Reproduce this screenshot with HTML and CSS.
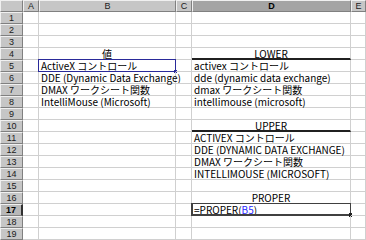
FILE: index.html
```html
<!DOCTYPE html>
<html lang="ja">
<head>
<meta charset="utf-8">
<title>Sheet</title>
<link rel="stylesheet" href="styles.css">
</head>
<body>
<div class="sheet">
  <div class="hd corner"></div><div class="hd col">A</div><div class="hd col">B</div><div class="hd col">C</div><div class="hd col sel">D</div><div class="hd col">E</div>

  <div class="hd rh">1</div><div class="cell"></div><div class="cell"></div><div class="cell"></div><div class="cell"></div><div class="cell"></div>
  <div class="hd rh">2</div><div class="cell"></div><div class="cell"></div><div class="cell"></div><div class="cell"></div><div class="cell"></div>
  <div class="hd rh">3</div><div class="cell"></div><div class="cell"></div><div class="cell"></div><div class="cell"></div><div class="cell"></div>
  <div class="hd rh">4</div><div class="cell"></div><div class="cell center">値</div><div class="cell"></div><div class="cell center title">LOWER</div><div class="cell"></div>
  <div class="hd rh">5</div><div class="cell"></div><div class="cell ref">ActiveX コントロール</div><div class="cell"></div><div class="cell">activex コントロール</div><div class="cell"></div>
  <div class="hd rh">6</div><div class="cell"></div><div class="cell">DDE (Dynamic Data Exchange)</div><div class="cell"></div><div class="cell">dde (dynamic data exchange)</div><div class="cell"></div>
  <div class="hd rh">7</div><div class="cell"></div><div class="cell">DMAX ワークシート関数</div><div class="cell"></div><div class="cell">dmax ワークシート関数</div><div class="cell"></div>
  <div class="hd rh">8</div><div class="cell"></div><div class="cell">IntelliMouse (Microsoft)</div><div class="cell"></div><div class="cell">intellimouse (microsoft)</div><div class="cell"></div>
  <div class="hd rh">9</div><div class="cell"></div><div class="cell"></div><div class="cell"></div><div class="cell"></div><div class="cell"></div>
  <div class="hd rh">10</div><div class="cell"></div><div class="cell"></div><div class="cell"></div><div class="cell center title">UPPER</div><div class="cell"></div>
  <div class="hd rh">11</div><div class="cell"></div><div class="cell"></div><div class="cell"></div><div class="cell">ACTIVEX コントロール</div><div class="cell"></div>
  <div class="hd rh">12</div><div class="cell"></div><div class="cell"></div><div class="cell"></div><div class="cell">DDE (DYNAMIC DATA EXCHANGE)</div><div class="cell"></div>
  <div class="hd rh">13</div><div class="cell"></div><div class="cell"></div><div class="cell"></div><div class="cell">DMAX ワークシート関数</div><div class="cell"></div>
  <div class="hd rh">14</div><div class="cell"></div><div class="cell"></div><div class="cell"></div><div class="cell">INTELLIMOUSE (MICROSOFT)</div><div class="cell"></div>
  <div class="hd rh">15</div><div class="cell"></div><div class="cell"></div><div class="cell"></div><div class="cell"></div><div class="cell"></div>
  <div class="hd rh">16</div><div class="cell"></div><div class="cell"></div><div class="cell"></div><div class="cell center">PROPER</div><div class="cell"></div>
  <div class="hd rh sel">17</div><div class="cell"></div><div class="cell"></div><div class="cell"></div><div class="cell active">=PROPER(<span class="refname">B5</span>)</div><div class="cell"></div>
  <div class="hd rh">18</div><div class="cell"></div><div class="cell"></div><div class="cell"></div><div class="cell"></div><div class="cell"></div>
  <div class="hd rh">19</div><div class="cell"></div><div class="cell"></div><div class="cell"></div><div class="cell"></div><div class="cell"></div>
</div>
</body>
</html>
```

FILE: styles.css
```css
* { box-sizing: border-box; }
html, body { margin: 0; padding: 0; background: #fff; }
body { width: 366px; height: 240px; overflow: hidden; }

.sheet {
  display: grid;
  grid-template-columns: 23px 16px 137px 16px 159px 15px;
  grid-auto-rows: 12px;
  font-family: "Noto Sans CJK JP", sans-serif;
  font-size: 10px;
  color: #000;
}

.cell {
  border-right: 1px solid #d0d0d0;
  border-bottom: 1px solid #d0d0d0;
  padding: 0 2px;
  line-height: 12px;
  white-space: nowrap;
  position: relative;
}

.center { text-align: center; }
.title { border-bottom: 2px solid #202020; }

.hd {
  background: #c6c6c6;
  border-top: 1px solid #f0f0f0;
  border-left: 1px solid #f0f0f0;
  border-right: 1px solid #808080;
  border-bottom: 1px solid #808080;
  text-align: center;
  color: #202020;
  font-family: "Liberation Sans", sans-serif;
  font-size: 9px;
  line-height: 10px;
}
.hd.sel { background: #a4a4a4; font-weight: bold; color: #000; }
.hd.rh.sel { background: #b8b8b8; border-right: 2px solid #303030; }

.ref::before {
  content: "";
  position: absolute;
  left: -1px; top: -1px; right: -1px; bottom: -1px;
  border: 1px solid #2a2a9a;
}
.ref::after {
  content: "";
  position: absolute;
  right: -2px; bottom: -2px;
  width: 3px; height: 3px;
  background: #2a2a9a;
}

.active::before {
  content: "";
  position: absolute;
  left: -1px; top: -1px; right: -1px; bottom: -1px;
  border: 1px solid #404040;
  border-left-width: 2px;
  border-bottom-width: 2px;
}
.active::after {
  content: "";
  position: absolute;
  right: -2px; bottom: -2px;
  width: 3px; height: 4px;
  background: #202020;
}
.refname { color: #2a2aff; }
```
